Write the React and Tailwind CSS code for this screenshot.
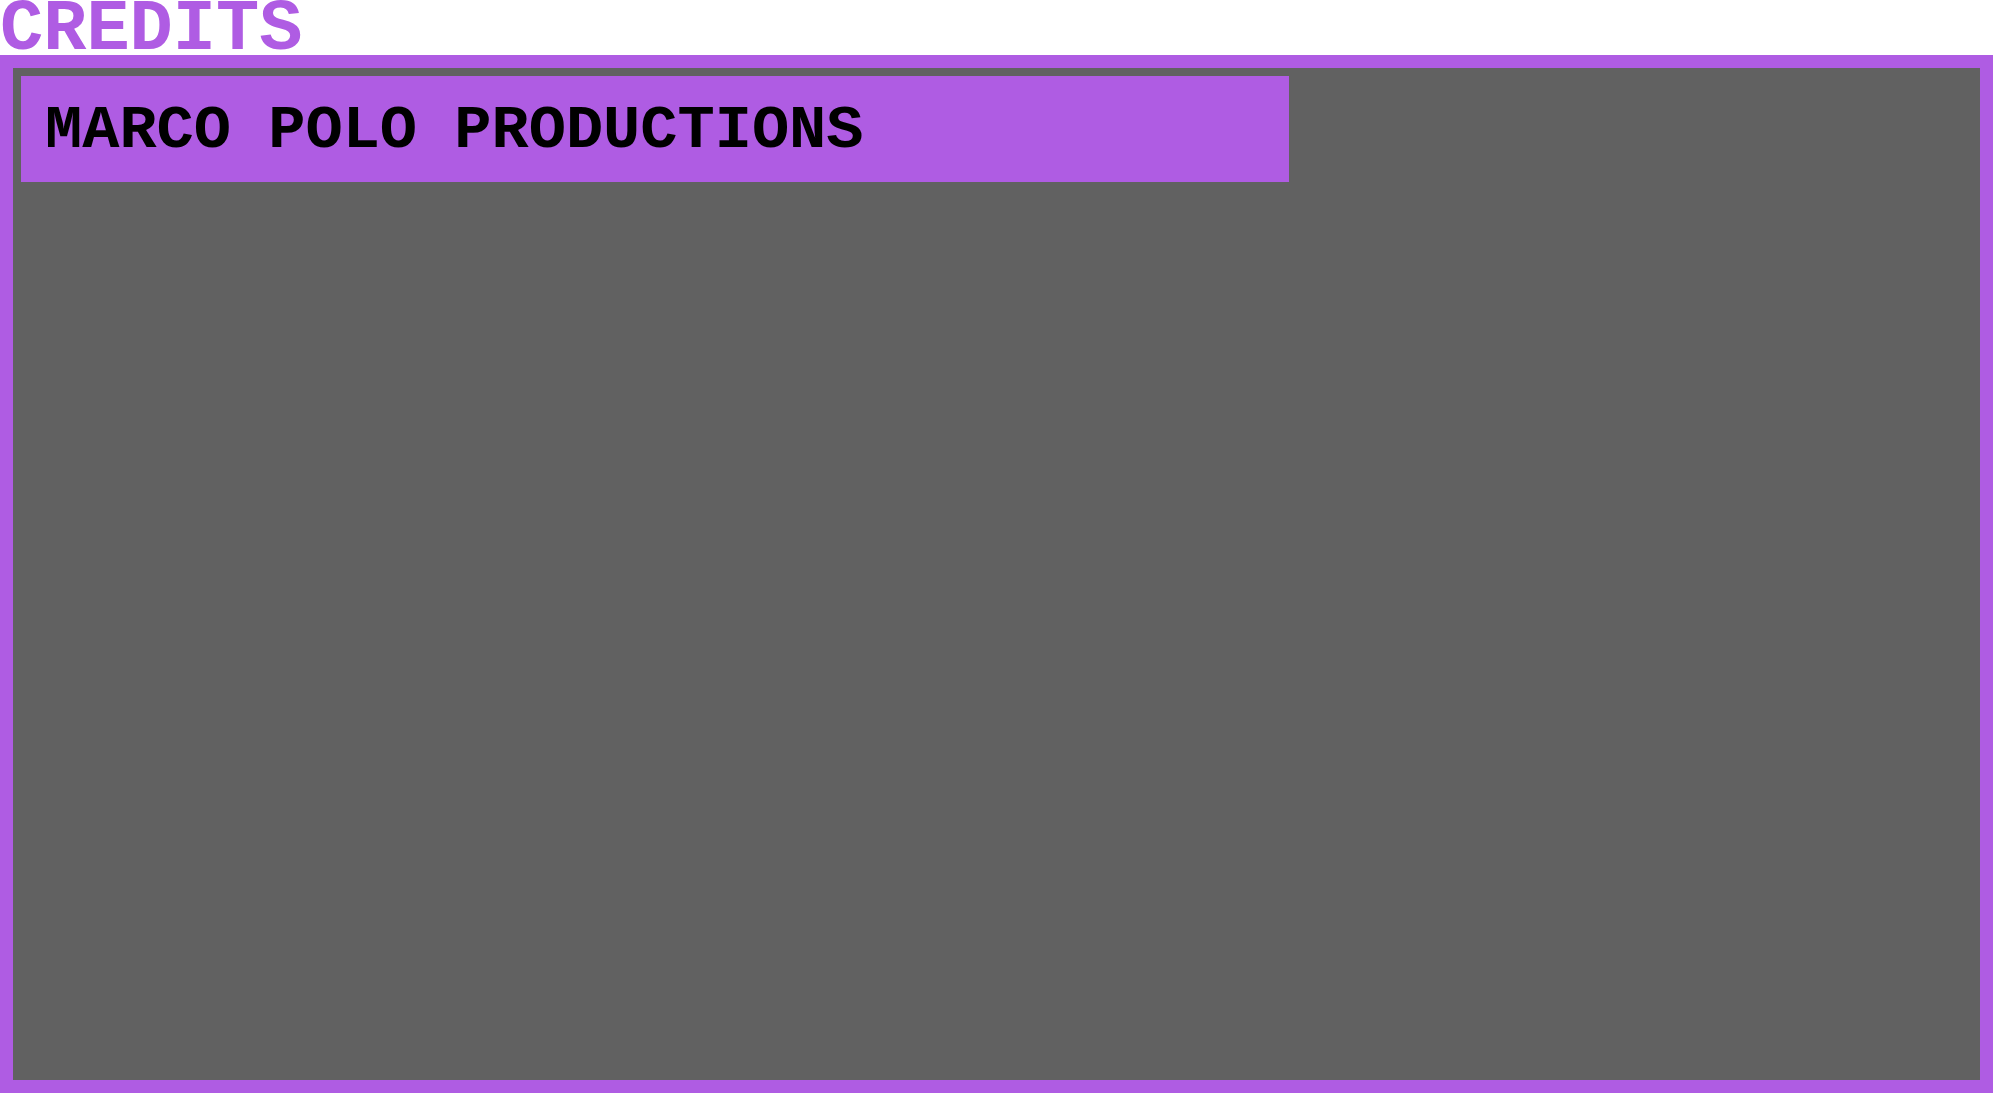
export default function App() {
  return (
    <main className="flex min-h-screen flex-col bg-white font-['Liberation_Mono',monospace] font-bold">
      <h1 className="h-[55px] text-[72px] leading-[60px] text-[#af5ce3]">CREDITS</h1>
      <section className="flex-1 border-[13px] border-[#af5ce3] bg-[#616161] p-2">
        <div className="flex h-[106px] w-[65%] items-center bg-[#af5ce3] px-6 pt-1">
          <p className="whitespace-nowrap text-[62px] leading-none text-black">
            MARCO POLO PRODUCTIONS
          </p>
        </div>
      </section>
    </main>
  );
}
